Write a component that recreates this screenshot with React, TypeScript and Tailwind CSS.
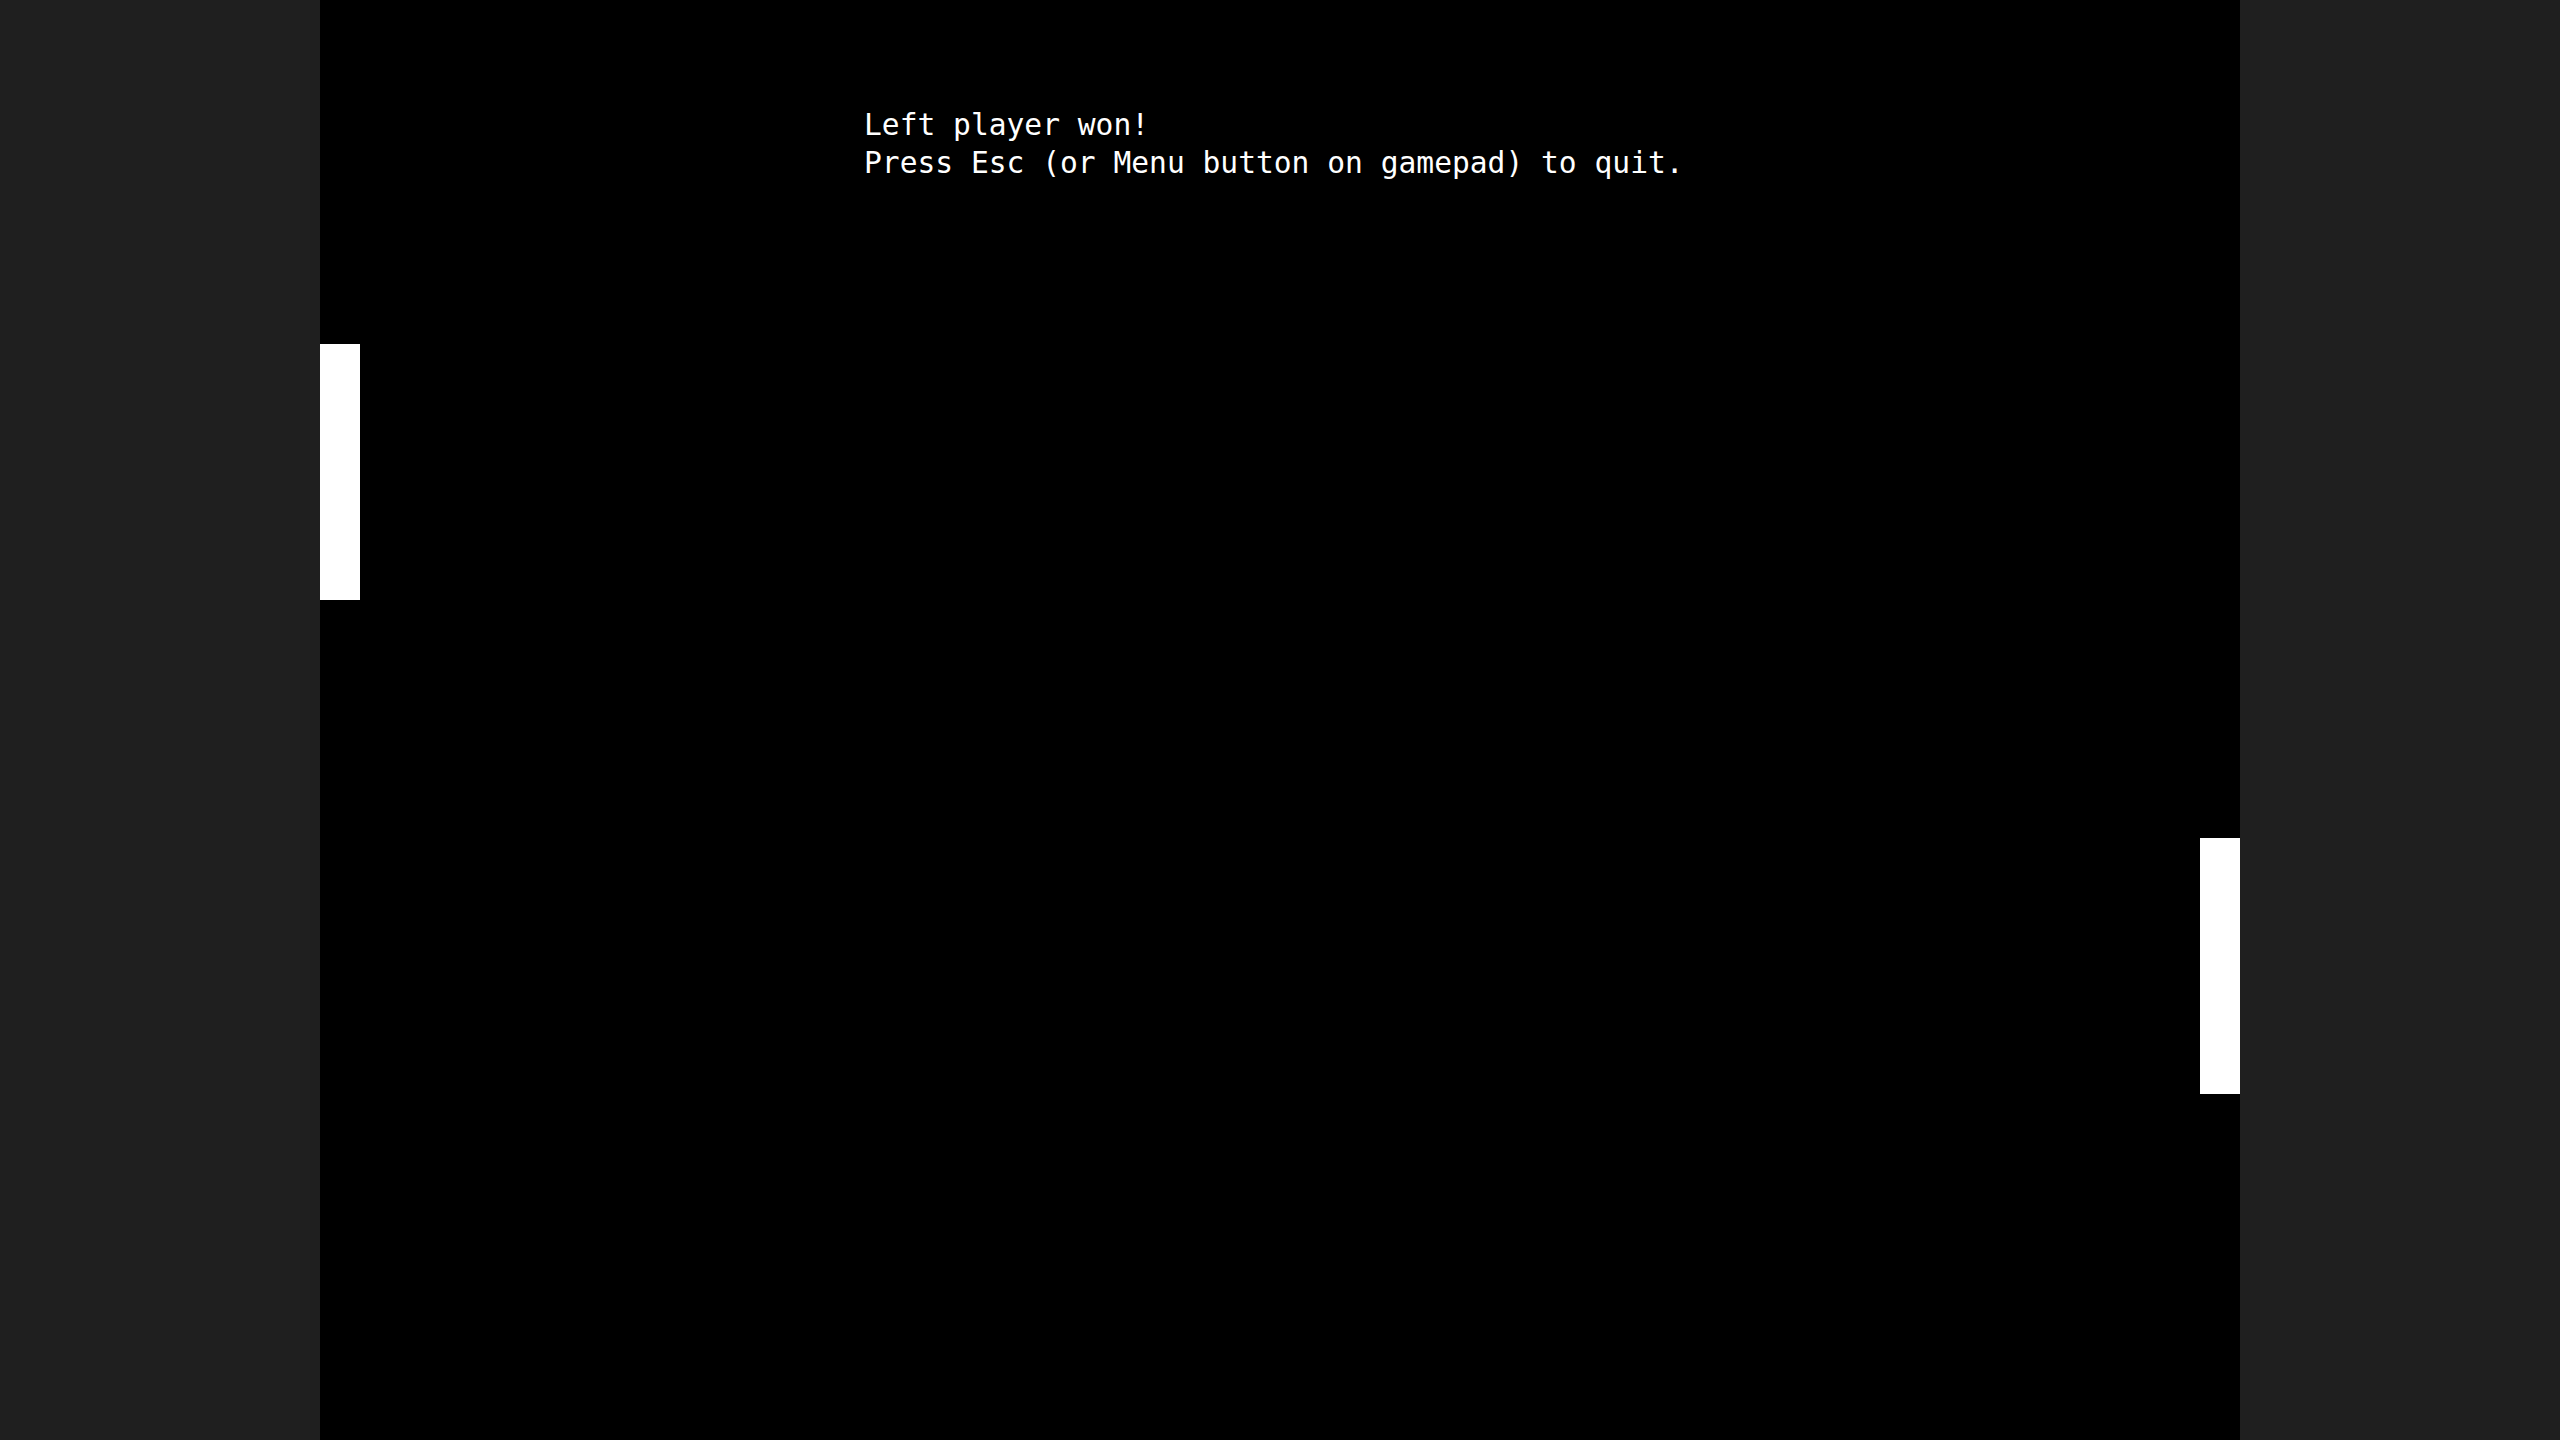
export default function App() {
  return (
    <div className="flex h-[1440px] w-full bg-[#1f1f1f]">
      <div className="flex-1" />
      <div className="relative h-full w-[1920px] bg-black">
        <div className="pl-[544px] pt-[106px] font-['DejaVu_Sans_Mono',monospace] text-[29.6px] leading-[38px] text-white">
          <div>Left player won!</div>
          <div>Press Esc (or Menu button on gamepad) to quit.</div>
        </div>
        {/* paddles sit on the play field */}
        <div className="absolute left-0 top-[344px] h-[256px] w-[40px] bg-white" />
        <div className="absolute right-0 top-[838px] h-[256px] w-[40px] bg-white" />
      </div>
      <div className="flex-1" />
    </div>
  );
}
